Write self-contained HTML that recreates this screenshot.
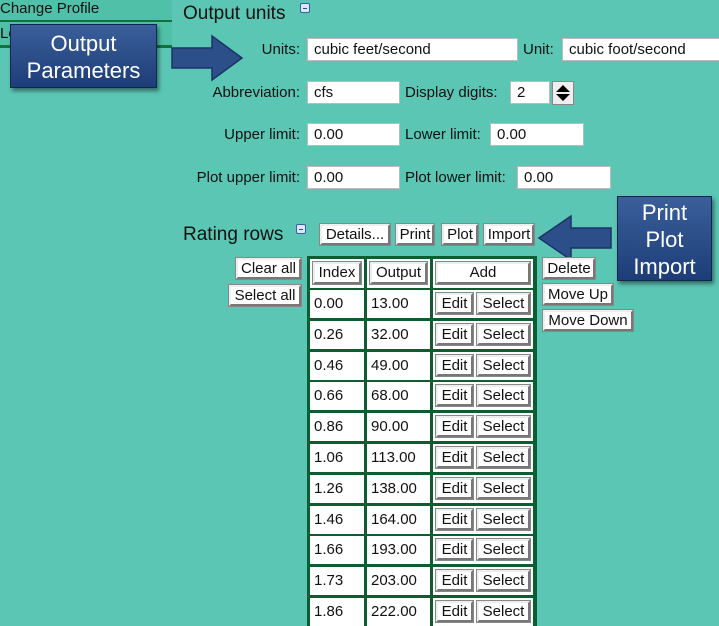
<!DOCTYPE html>
<html><head><meta charset="utf-8"><style>
*{box-sizing:border-box;margin:0;padding:0}
body{width:719px;height:620px;overflow:hidden;background:#5cc6b4;font-family:"Liberation Sans",Arial,sans-serif;font-size:15px;color:#111;position:relative}
.a{position:absolute}
.lbl{position:absolute;font-size:15px;white-space:nowrap}
.in{position:absolute;background:#fff;border:1px solid #bbb;height:23px;font-size:15px;padding:2px 0 0 6px;white-space:nowrap;overflow:hidden}
.btn{position:absolute;background:#fff;border:2px solid;border-color:#eee #777 #777 #eee;outline:1px solid #888;height:21px;font-size:15px;text-align:center;line-height:17px;white-space:nowrap;color:#111}
.callout{position:absolute;background:linear-gradient(#3a5f9a,#1d3d78);border:1px solid #0f2650;box-shadow:2px 3px 4px rgba(0,0,0,.45);color:#fff;font-size:22px;text-align:center;line-height:27px}
.cell{position:absolute;background:#fff;font-size:15px;padding:5px 0 0 4px;height:28px}
.tog{position:absolute;width:10px;height:10px;border:1px solid #3a5fa0;background:#dde8ff;border-radius:2px}
.tog:after{content:"";position:absolute;left:2px;top:4px;width:4px;height:1px;background:#2a4a90}
</style></head><body>
<div class="a" style="left:0;top:0;width:172px;height:21px;background:#51c0a8"></div>
<div class="a" style="left:0;top:20px;width:172px;height:2px;background:#157040"></div>
<div class="a" style="left:0;top:22px;width:172px;height:24px;background:#51c0a8"></div>
<div class="a" style="left:0;top:45px;width:172px;height:3px;background:#157040"></div>
<div class="lbl" style="left:0;top:0px">Change Profile</div>
<div class="lbl" style="left:0;top:25px">Lo</div>

<div class="callout" style="left:10px;top:24px;width:147px;height:64px;padding-top:5px">Output<br>Parameters</div>
<svg class="a" style="left:170px;top:34px" width="76" height="48"><path d="M2 14 H42 V2 L72 24 L42 46 V34 H2 Z" fill="#2c4f8a" stroke="#1a3366" stroke-width="1.5"/></svg>

<div class="lbl" style="left:183px;top:3px;font-size:19px">Output units</div>
<div class="tog" style="left:300px;top:3px"></div>

<div class="lbl" style="right:419px;top:41px">Units:</div>
<div class="in" style="left:307px;top:38px;width:211px">cubic feet/second</div>
<div class="lbl" style="left:523px;top:41px">Unit:</div>
<div class="in" style="left:562px;top:38px;width:160px">cubic foot/second</div>

<div class="lbl" style="right:419px;top:84px">Abbreviation:</div>
<div class="in" style="left:307px;top:81px;width:93px">cfs</div>
<div class="lbl" style="left:405px;top:84px">Display digits:</div>
<div class="in" style="left:510px;top:81px;width:40px">2</div>
<div class="a" style="left:552px;top:81px;width:22px;height:24px;background:#eee;border:1px solid #888"><svg width="20" height="22"><path d="M3 10 L10 3 L17 10Z M3 12 L10 19 L17 12Z" fill="#000"/></svg></div>

<div class="lbl" style="right:419px;top:126px">Upper limit:</div>
<div class="in" style="left:307px;top:123px;width:93px">0.00</div>
<div class="lbl" style="left:405px;top:126px">Lower limit:</div>
<div class="in" style="left:490px;top:123px;width:94px">0.00</div>

<div class="lbl" style="right:419px;top:169px">Plot upper limit:</div>
<div class="in" style="left:307px;top:166px;width:93px">0.00</div>
<div class="lbl" style="left:405px;top:169px">Plot lower limit:</div>
<div class="in" style="left:517px;top:166px;width:94px">0.00</div>

<div class="lbl" style="left:183px;top:224px;font-size:19px">Rating rows</div>
<div class="tog" style="left:296px;top:224px"></div>
<div class="btn" style="left:320px;top:224px;width:70px">Details...</div>
<div class="btn" style="left:396px;top:224px;width:38px">Print</div>
<div class="btn" style="left:442px;top:224px;width:36px">Plot</div>
<div class="btn" style="left:484px;top:224px;width:50px">Import</div>

<svg class="a" style="left:535px;top:214px" width="78" height="48"><path d="M76 14 H36 V2 L4 24 L36 46 V34 H76 Z" fill="#2c4f8a" stroke="#1a3366" stroke-width="1.5"/></svg>
<div class="callout" style="left:617px;top:196px;width:95px;height:85px;padding-top:2px;line-height:27px">Print<br>Plot<br>Import</div>

<div class="btn" style="left:236px;top:258px;width:65px">Clear all</div>
<div class="btn" style="left:229px;top:285px;width:72px">Select all</div>
<div class="btn" style="left:543px;top:258px;width:52px">Delete</div>
<div class="btn" style="left:543px;top:284px;width:70px">Move Up</div>
<div class="btn" style="left:543px;top:310px;width:90px">Move Down</div>

<div class="a" style="left:307px;top:256px;width:230px;height:370px;background:#0c5e30"></div>
<div class="cell" style="left:310px;top:259px;width:54px;height:29px;padding:3px"><div class="btn" style="position:relative;width:48px;height:22px">Index</div></div>
<div class="cell" style="left:367px;top:259px;width:63px;height:29px;padding:3px"><div class="btn" style="position:relative;width:57px;height:22px">Output</div></div>
<div class="cell" style="left:433px;top:259px;width:100px;height:29px;padding:3px"><div class="btn" style="position:relative;width:94px;height:22px">Add</div></div>

<div id="rows"></div>
<script>
var d=[["0.00","13.00"],["0.26","32.00"],["0.46","49.00"],["0.66","68.00"],["0.86","90.00"],["1.06","113.00"],["1.26","138.00"],["1.46","164.00"],["1.66","193.00"],["1.73","203.00"],["1.86","222.00"]];
var h="";for(var i=0;i<d.length;i++){var y=290+i*30.8;
h+='<div class="cell" style="left:310px;top:'+y+'px;width:54px">'+d[i][0]+'</div>';
h+='<div class="cell" style="left:367px;top:'+y+'px;width:63px">'+d[i][1]+'</div>';
h+='<div class="cell" style="left:433px;top:'+y+'px;width:100px;padding:3px"><div class="btn" style="left:3px;top:3px;width:37px">Edit</div><div class="btn" style="left:44px;top:3px;width:53px">Select</div></div>';}
document.getElementById("rows").innerHTML=h;
</script>
</body></html>
